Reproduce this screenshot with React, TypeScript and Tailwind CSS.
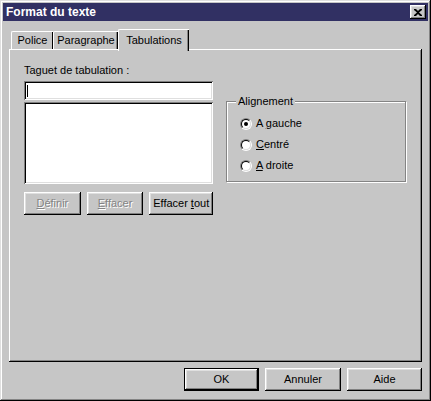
import React from "react";

const raised =
  "shadow-[inset_-1px_-1px_#000,inset_1px_1px_#fff,inset_-2px_-2px_#808080,inset_2px_2px_#dfdfdf]";
const sunken =
  "shadow-[inset_1px_1px_#808080,inset_-1px_-1px_#fff,inset_2px_2px_#000,inset_-2px_-2px_#dfdfdf]";

function Btn({
  children,
  w,
  disabled,
  def,
}: {
  children: React.ReactNode;
  w: string;
  disabled?: boolean;
  def?: boolean;
}) {
  return (
    <div
      className={`${w} h-[23px] flex items-center justify-center bg-[#c6c6c6] ${
        def ? "border border-black" : ""
      } ${raised} ${disabled ? "text-[#848484] [text-shadow:1px_1px_#fff]" : "text-black"}`}
    >
      {children}
    </div>
  );
}

function Radio({ checked, children }: { checked?: boolean; children: React.ReactNode }) {
  return (
    <div className="flex items-center h-[13px] gap-[4px]">
      <div className="w-[12px] h-[12px] rounded-full border border-t-[#848484] border-l-[#848484] border-b-white border-r-white">
        <div className="w-full h-full rounded-full border border-t-black border-l-black border-b-[#dfdfdf] border-r-[#dfdfdf] bg-white flex items-center justify-center">
          {checked && <div className="w-[4px] h-[4px] rounded-full bg-black" />}
        </div>
      </div>
      <span>{children}</span>
    </div>
  );
}

export default function App() {
  return (
    <div
      className="w-[431px] h-[401px] bg-[#c6c6c6] p-[3px] flex flex-col text-[11px] leading-[13px] text-black shadow-[inset_-1px_-1px_#000,inset_1px_1px_#dfdfdf,inset_-2px_-2px_#848484,inset_2px_2px_#fff]"
      style={{ fontFamily: '"Liberation Sans", Arial, sans-serif' }}
    >
      {/* Title bar */}
      <div className="h-[18px] bg-[#313063] flex items-center justify-between pl-[3px] pr-[2px]">
        <span className="text-white font-bold text-[12px]">Format du texte</span>
        <div className={`w-[16px] h-[14px] bg-[#c6c6c6] flex items-center justify-center ${raised}`}>
          <svg width="8" height="7" viewBox="0 0 8 7">
            <path d="M0 0h2l2 2 2-2h2v1L5 3.5 8 6v1H6L4 5 2 7H0V6l3-2.5L0 1z" fill="#000" />
          </svg>
        </div>
      </div>

      {/* Tabs */}
      <div className="mt-[8px] mx-[6px] h-[20px] flex items-end pl-[2px]">
        <div className="h-[18px] w-[42px] flex items-center justify-center border-t border-l border-white rounded-tl-[2px] shadow-[inset_-1px_0_#000]">
          Police
        </div>
        <div className="h-[18px] w-[65px] flex items-center justify-center border-t border-l border-white rounded-tl-[2px] shadow-[inset_-1px_0_#000,inset_-2px_0_#848484]">
          Paragraphe
        </div>
        <div className="relative z-10 -mb-[2px] h-[22px] w-[71px] flex items-start pt-[4px] justify-center bg-[#c6c6c6] border-t border-l border-white rounded-tl-[2px] shadow-[inset_-1px_0_#000,inset_-2px_0_#848484]">
          Tabulations
        </div>
      </div>

      {/* Panel */}
      <div className="mx-[6px] h-[313px] shadow-[inset_-1px_-1px_#000,inset_1px_1px_#fff,inset_-2px_-2px_#848484] pl-[15px] pt-[15px] flex items-start">
        <div className="w-[189px] flex flex-col">
          <div className="h-[13px]">Taguet de tabulation :</div>
          <div className={`mt-[4px] h-[19px] bg-white ${sunken} flex items-center pl-[3px]`}>
            <div className="w-[1px] h-[12px] bg-black" />
          </div>
          <div className={`mt-[2px] h-[82px] bg-white ${sunken}`} />
          <div className="mt-[8px] flex gap-[6px]">
            <Btn w="w-[57px]" disabled>
              <span className="underline">D</span>éfinir
            </Btn>
            <Btn w="w-[57px]" disabled>
              <span className="underline">E</span>ffacer
            </Btn>
            <Btn w="w-[64px]">
              Effacer <span className="underline ml-[3px]">t</span>out
            </Btn>
          </div>
        </div>

        <div className="ml-[13px] mt-[37px] relative w-[180px] h-[81px] border border-[#848484] shadow-[inset_1px_1px_#fff,1px_1px_#fff]">
          <span className="absolute -top-[7px] left-[9px] px-[2px] bg-[#c6c6c6]">Alignement</span>
          <div className="pl-[13px] pt-[15px] flex flex-col gap-[8px]">
            <Radio checked>
              A <span className="underline">g</span>auche
            </Radio>
            <Radio>
              <span className="underline">C</span>entré
            </Radio>
            <Radio>
              <span className="underline">A</span> droite
            </Radio>
          </div>
        </div>
      </div>

      {/* Bottom buttons */}
      <div className="mt-[6px] mx-[6px] flex justify-end gap-[6px]">
        <Btn w="w-[75px]" def>
          OK
        </Btn>
        <Btn w="w-[76px]">Annuler</Btn>
        <Btn w="w-[75px]">Aide</Btn>
      </div>
    </div>
  );
}
